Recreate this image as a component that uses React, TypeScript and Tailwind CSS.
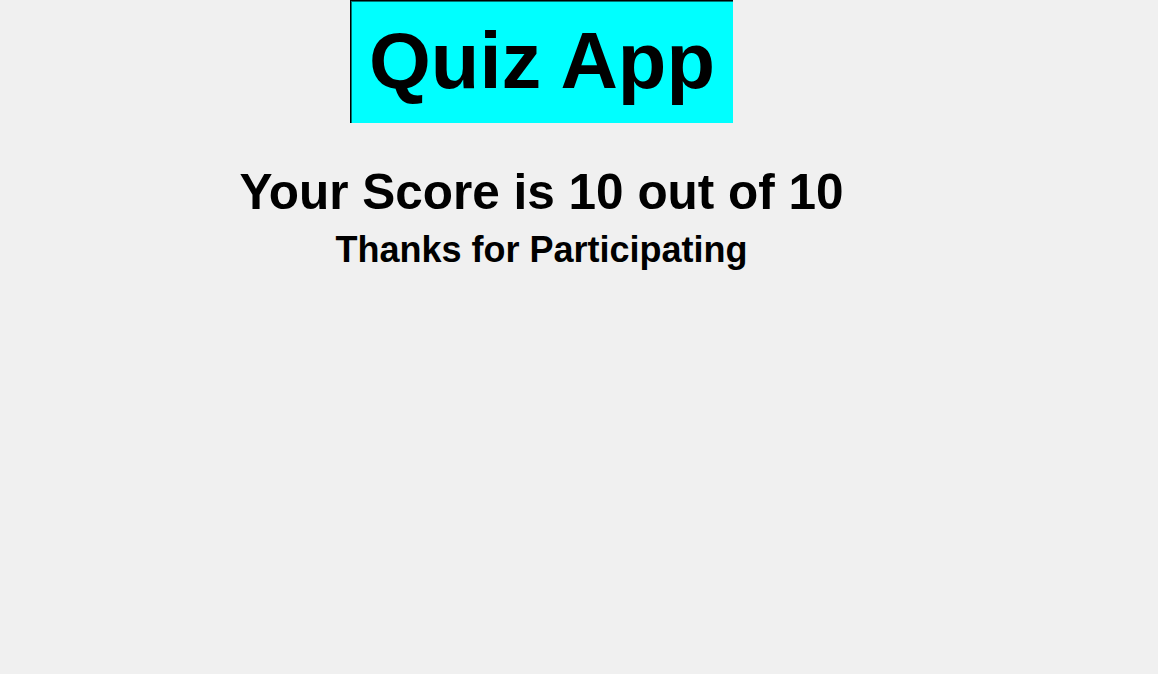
export default function App() {
  return (
    <div className="min-h-[674px] w-full bg-[#f0f0f0] font-['Liberation_Sans',Arial,sans-serif] text-black">
      <div className="flex w-[1083px] flex-col items-center">
        <div className="flex h-[123px] w-[383px] items-start justify-center border-l border-t border-black bg-[#00ffff] pt-[20px] shadow-[inset_1px_1px_0_#007575]">
          <h1 className="text-[79.5px] font-bold leading-none">Quiz App</h1>
        </div>
        <h2 className="mt-[44px] text-[49.5px] font-bold leading-none">Your Score is 10 out of 10</h2>
        <p className="mt-[15px] text-[36px] font-bold leading-none">Thanks for Participating</p>
      </div>
    </div>
  );
}
